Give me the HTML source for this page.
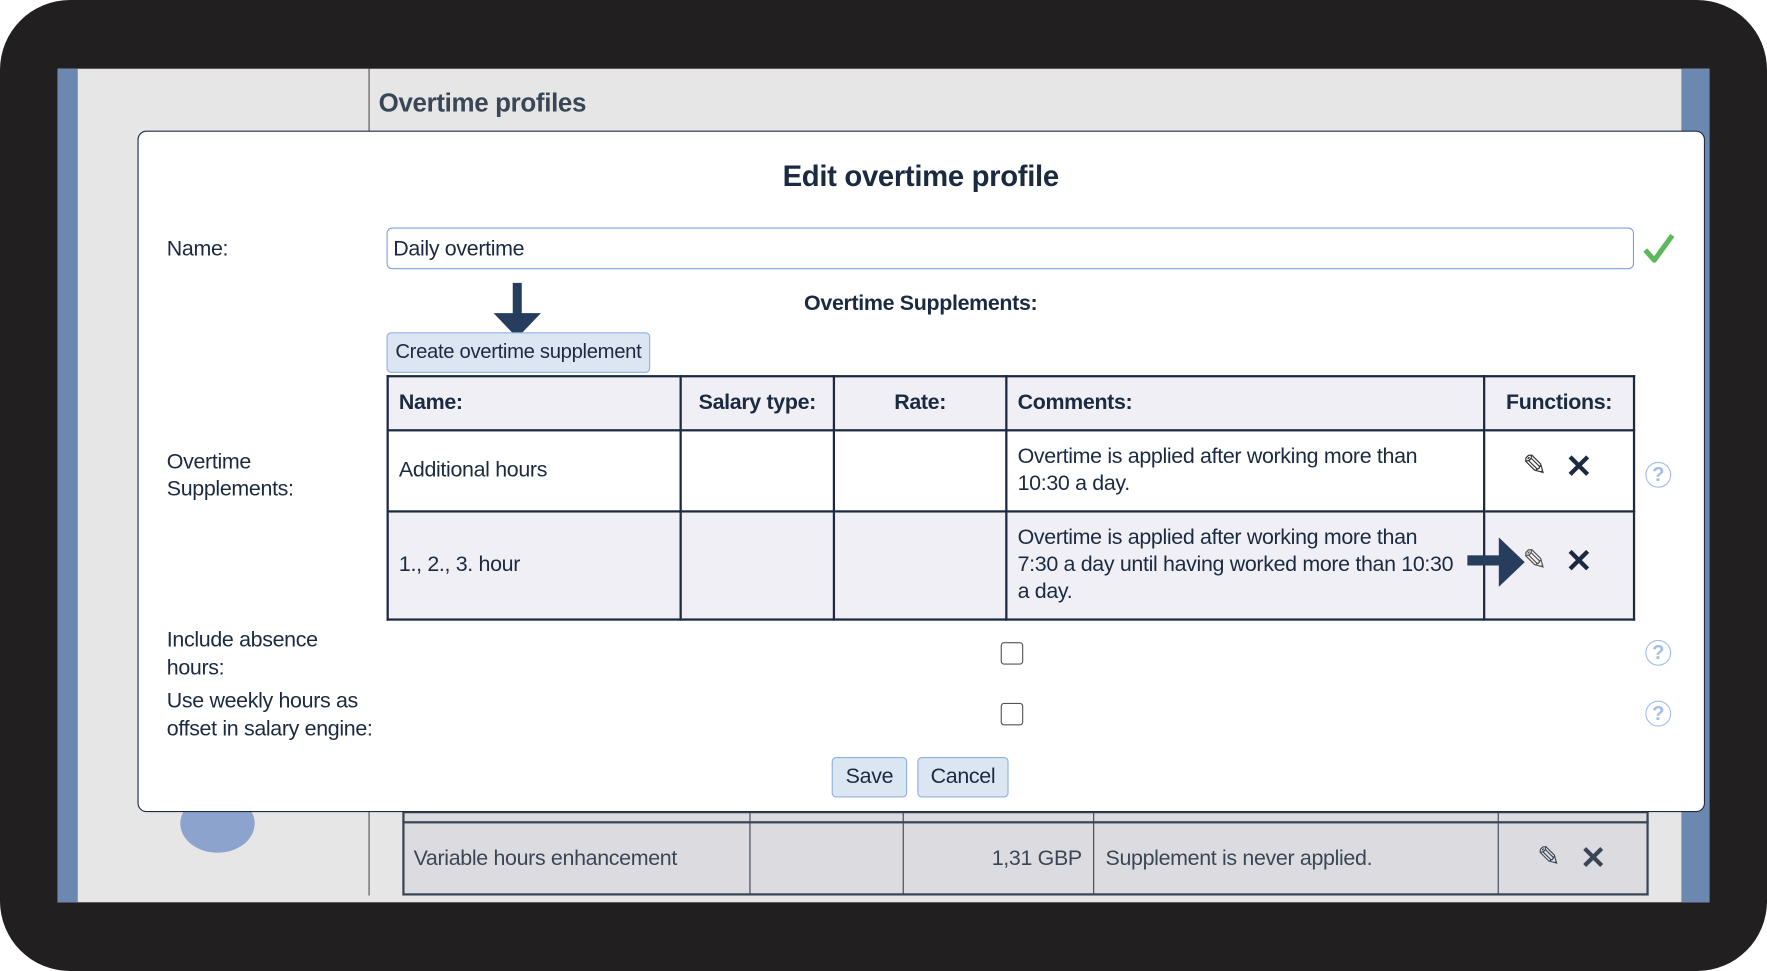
<!DOCTYPE html>
<html><head><meta charset="utf-8"><style>
*{box-sizing:border-box;margin:0;padding:0}
html,body{width:1767px;height:971px;overflow:hidden;background:#fff}
#w{position:absolute;left:0;top:0;width:1568px;height:862px;transform:scale(1.12692,1.12645);transform-origin:0 0;font-family:"Liberation Sans",sans-serif;color:#1b2a40;letter-spacing:-0.3px}
.a{position:absolute}
.frame{left:0;top:0;width:1568px;height:862px;background:#211f20;border-radius:62px}
.t{font-size:19px;white-space:nowrap}
.b{font-weight:bold}
.help{width:23px;height:23px;border:1.5px solid #a5bde9;border-radius:50%;color:#a5bde9;font-size:18px;font-weight:bold;text-align:center;line-height:21px;letter-spacing:0}
.cb{width:20px;height:20px;border:1.5px solid #555;border-radius:3px;background:#fff}
.btn{background:#dce6f3;border:1.5px solid #8fb1e2;border-radius:4px;font-size:19px;text-align:center}
table{border-collapse:collapse;position:absolute}
td{border:2px solid #1b2a40;font-size:19px;padding:0 9px;vertical-align:middle}
</style></head><body><div id="w">
<div class="a frame"></div>
<div class="a" style="left:51px;top:61px;width:1466px;height:740px;background:#e6e6e6"></div>
<div class="a" style="left:51px;top:61px;width:18px;height:740px;background:#6b88b0"></div>
<div class="a" style="left:1492px;top:61px;width:25px;height:740px;background:#6b88b0"></div>
<div class="a" style="left:327px;top:61px;width:1px;height:734px;background:#555"></div>
<div class="a b" style="left:336px;top:78px;font-size:23px;color:#3a4656;letter-spacing:-0.3px">Overtime profiles</div>
<div class="a" style="left:160px;top:705px;width:66px;height:52px;background:#7b97c8;border-radius:50%;opacity:.85"></div>
<div class="a" style="left:357px;top:720px;width:1106px;height:75px;background:#dcdce0;border:2px solid #3a4656"></div>
<div class="a" style="left:357px;top:729px;width:1106px;height:2px;background:#3a4656"></div>
<div class="a" style="left:665px;top:720px;width:1px;height:75px;background:#3a4656"></div>
<div class="a" style="left:801px;top:720px;width:1px;height:75px;background:#3a4656"></div>
<div class="a" style="left:970px;top:720px;width:1px;height:75px;background:#3a4656"></div>
<div class="a" style="left:1329px;top:720px;width:1px;height:75px;background:#3a4656"></div>
<div class="a t" style="left:367px;top:752px;color:#3a4656">Variable hours enhancement</div>
<div class="a t" style="left:860px;width:100px;text-align:right;top:752px;color:#3a4656">1,31 GBP</div>
<div class="a t" style="left:981px;top:752px;color:#3a4656">Supplement is never applied.</div>
<div class="a" style="left:1364px;top:746px;font-size:25px;color:#3a4656">✎</div>
<div class="a b" style="left:1402px;top:745px;font-size:28px;color:#3a4656">✕</div>
<div class="a" style="left:122px;top:116px;width:1391px;height:605px;background:#fff;border:1.5px solid #1f2d45;border-radius:8px"></div>
<div class="a b" style="left:617px;width:400px;text-align:center;top:141px;font-size:26px;letter-spacing:-0.3px">Edit overtime profile</div>
<div class="a t" style="left:148px;top:211px">Name:</div>
<div class="a" style="left:343px;top:202px;width:1107px;height:37px;border:1.5px solid #7fa2dc;border-radius:5px"></div>
<div class="a t" style="left:349px;top:211px">Daily overtime</div>
<svg class="a" style="left:1458px;top:205px" width="28" height="30" viewBox="0 0 28 30"><path d="M2 17 L10 26 L26 4" fill="none" stroke="#5cb85c" stroke-width="4.5" stroke-linejoin="round"/></svg>
<div class="a b t" style="left:617px;width:400px;text-align:center;top:259px">Overtime Supplements:</div>
<svg class="a" style="left:437px;top:251px" width="44" height="50"><rect x="18" y="0" width="8" height="28" fill="#263d5e"/><path d="M1 27 H43 L22 49 Z" fill="#263d5e"/></svg>
<div class="a btn" style="left:343px;top:295px;width:234px;height:36px;line-height:33px;font-size:18px">Create overtime supplement</div>
<table style="left:343px;top:333px;width:1108px;height:217px">
<tr style="height:48px;background:#efeff5"><td class="b" style="width:260px">Name:</td><td class="b" style="width:136px;text-align:center">Salary type:</td><td class="b" style="width:153px;text-align:center">Rate:</td><td class="b" style="width:424px">Comments:</td><td class="b" style="text-align:center">Functions:</td></tr>
<tr style="height:72px;background:#fff"><td>Additional hours</td><td></td><td></td><td style="line-height:24px;white-space:nowrap">Overtime is applied after working more than<br>10:30 a day.</td><td></td></tr>
<tr style="height:96px;background:#efeff5"><td>1., 2., 3. hour</td><td></td><td></td><td style="line-height:24px;white-space:nowrap">Overtime is applied after working more than<br>7:30 a day until having worked more than 10:30<br>a day.</td><td></td></tr>
</table>
<div class="a" style="left:1351px;top:398px;font-size:26px;color:#333">✎</div>
<div class="a b" style="left:1389px;top:397px;font-size:29px">✕</div>
<div class="a" style="left:1351px;top:482px;font-size:26px;color:#555">✎</div>
<div class="a b" style="left:1389px;top:481px;font-size:29px">✕</div>
<svg class="a" style="left:1302px;top:476px" width="52" height="46"><rect x="0" y="17" width="30" height="9" fill="#263d5e"/><path d="M28 1 V45 L51 23 Z" fill="#263d5e"/></svg>
<div class="a t" style="left:148px;top:399px;line-height:24px;white-space:normal">Overtime<br>Supplements:</div>
<div class="a help" style="left:1460px;top:410px">?</div>
<div class="a t" style="left:148px;top:556px;line-height:25px">Include absence<br>hours:</div>
<div class="a cb" style="left:888px;top:570px"></div>
<div class="a help" style="left:1460px;top:568px">?</div>
<div class="a t" style="left:148px;top:610px;line-height:25px">Use weekly hours as<br>offset in salary engine:</div>
<div class="a cb" style="left:888px;top:624px"></div>
<div class="a help" style="left:1460px;top:622px">?</div>
<div class="a btn" style="left:738px;top:672px;width:67px;height:36px;line-height:33px">Save</div>
<div class="a btn" style="left:814px;top:672px;width:81px;height:36px;line-height:33px">Cancel</div>
</div></body></html>
